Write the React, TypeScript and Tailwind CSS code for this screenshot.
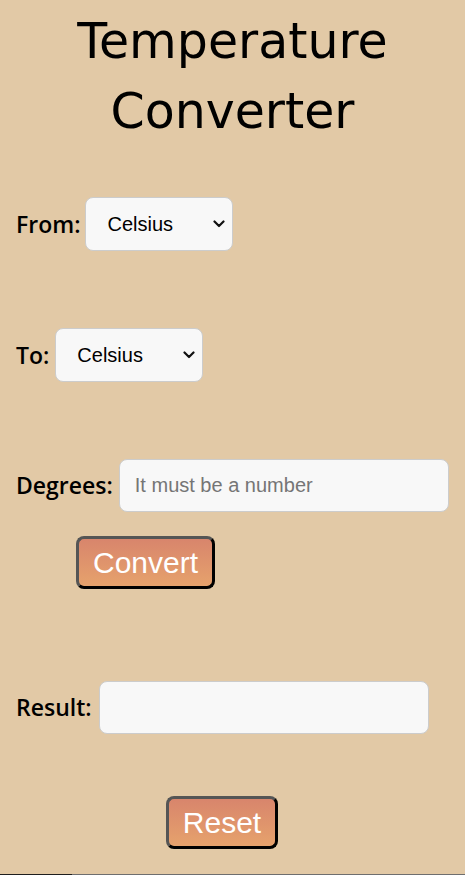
import { useState } from "react";

const label = "font-['Open_Sans',sans-serif] text-[23px] font-semibold text-black";
const field =
  "bg-[#f8f8f8] border border-[#cccccc] rounded-lg font-['Liberation_Sans',Arial,sans-serif] text-[20px] text-black outline-none";
const btn =
  "rounded-lg border-[3px] border-t-[#555555] border-l-[#555555] border-b-black border-r-black bg-gradient-to-b from-[#d8856c] to-[#e6a26c] font-['Liberation_Sans',Arial,sans-serif] text-[30px] text-white leading-none";

function Chevron() {
  return (
    <svg
      className="absolute right-[8px] top-1/2 -translate-y-1/2 pointer-events-none"
      width="12"
      height="8"
      viewBox="0 0 12 8"
      fill="none"
    >
      <path d="M1.5 1.5 L6 6 L10.5 1.5" stroke="#111" strokeWidth="2.2" strokeLinecap="round" strokeLinejoin="round" />
    </svg>
  );
}

function Select({ value, onChange }: { value: string; onChange: (v: string) => void }) {
  return (
    <div className="relative">
      <select
        value={value}
        onChange={(e) => onChange(e.target.value)}
        className={`${field} appearance-none w-[148px] h-[54px] pl-[21px] pr-6`}
      >
        <option>Celsius</option>
        <option>Fahrenheit</option>
        <option>Kelvin</option>
      </select>
      <Chevron />
    </div>
  );
}

export default function App() {
  const [from, setFrom] = useState("Celsius");
  const [to, setTo] = useState("Celsius");
  const [deg, setDeg] = useState("");
  const [result, setResult] = useState("");

  return (
    <div className="min-h-screen bg-[#e2c9a6] flex flex-col">
      <h1 className="text-center font-['DejaVu_Sans',sans-serif] text-[49px] leading-[70px] text-black pt-[7px]">
        Temperature
        <br />
        Converter
      </h1>

      <div className="flex items-center gap-[5px] pl-4 mt-[50px]">
        <span className={label}>From:</span>
        <Select value={from} onChange={setFrom} />
      </div>

      <div className="flex items-center gap-[6px] pl-4 mt-[77px]">
        <span className={label}>To:</span>
        <Select value={to} onChange={setTo} />
      </div>

      <div className="flex items-center gap-[6px] pl-4 mt-[77px]">
        <span className={label}>Degrees:</span>
        <input
          value={deg}
          onChange={(e) => setDeg(e.target.value)}
          placeholder="It must be a number"
          className={`${field} w-[330px] h-[53px] pl-[15px] placeholder:text-[#757575]`}
        />
      </div>

      <div className="pl-[76px] mt-6">
        <button className={`${btn} w-[139px] h-[53px]`} onClick={() => setResult(deg)}>
          Convert
        </button>
      </div>

      <div className="flex items-center gap-[7px] pl-4 mt-[92px]">
        <span className={label}>Result:</span>
        <input value={result} readOnly className={`${field} w-[330px] h-[53px] pl-[15px]`} />
      </div>

      <div className="pl-[166px] mt-[62px]">
        <button
          className={`${btn} w-[112px] h-[53px]`}
          onClick={() => {
            setDeg("");
            setResult("");
          }}
        >
          Reset
        </button>
      </div>

      <div className="mt-auto flex h-px">
        <div className="w-[72px] bg-[#1e1e1e]" />
        <div className="flex-1 bg-[#6e6e6e]" />
      </div>
    </div>
  );
}
